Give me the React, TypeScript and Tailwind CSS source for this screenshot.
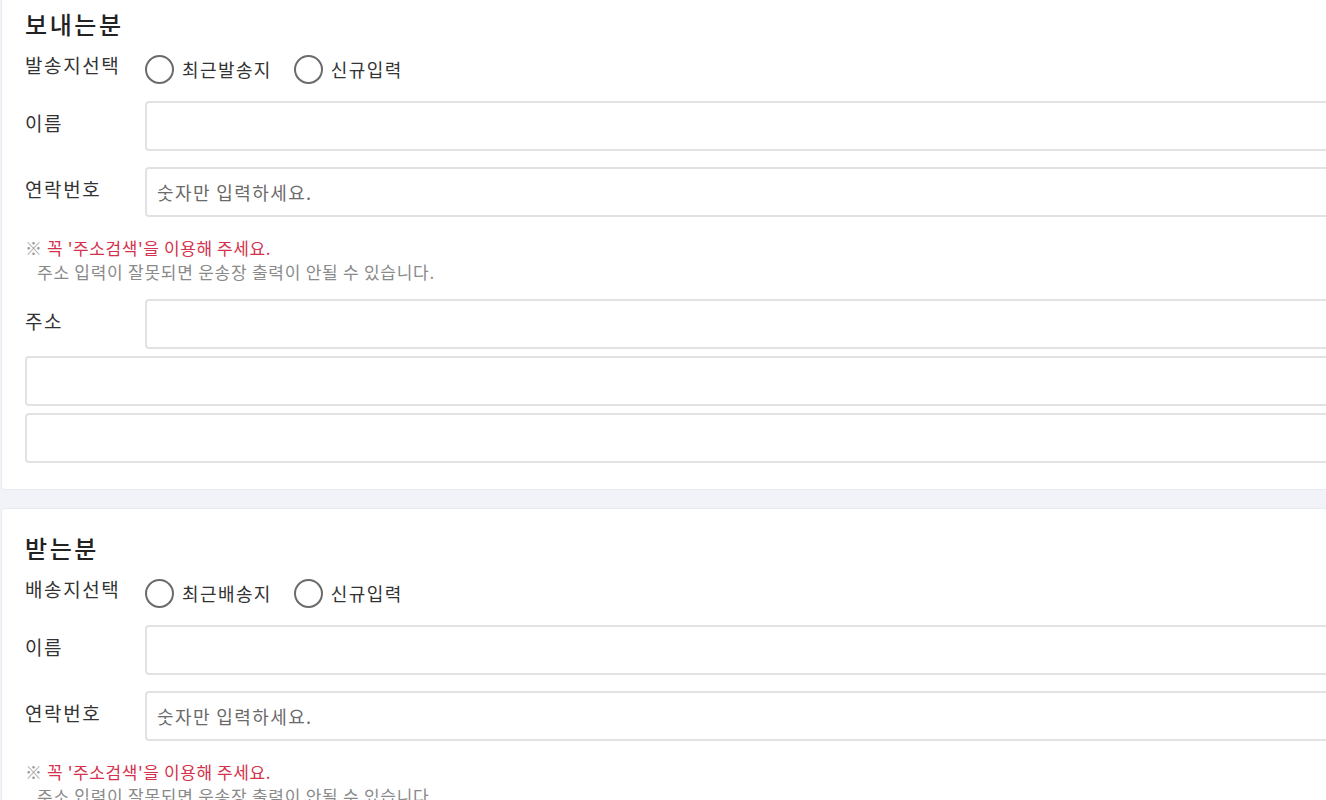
import React from "react";

const font = { fontFamily: '"Noto Sans CJK KR", "Noto Sans", sans-serif' };

const TextInput = ({ placeholder, className = "" }: { placeholder?: string; className?: string }) => (
  <input
    type="text"
    placeholder={placeholder}
    className={`block h-[50px] w-full rounded-[4px] border-2 border-[#e2e2e2] bg-white pl-[10px] text-[18px] tracking-[1.4px] text-[#333] outline-none placeholder:text-[#6a6a6a] ${className}`}
  />
);

const Radio = ({ label }: { label: string }) => (
  <label className="flex items-center gap-[8px]">
    <span className="block h-[29px] w-[29px] rounded-full border-2 border-[#6b6b6b] bg-white" />
    <span className="text-[18px] leading-[24px] tracking-[1.4px] text-[#333]">{label}</span>
  </label>
);

const FieldRow = ({ label, placeholder }: { label: string; placeholder?: string }) => (
  <div className="flex items-start">
    <div className="w-[120px] shrink-0 pt-[10px] text-[19px] leading-[24px] tracking-[1.6px] text-[#333]">{label}</div>
    <div className="flex-1">
      <TextInput placeholder={placeholder} />
    </div>
  </div>
);

const AddressCard = ({ title, pickLabel, recentLabel }: { title: string; pickLabel: string; recentLabel: string }) => (
  <section className="ml-[1px] rounded-[4px] border border-[#e9eaef] bg-white px-[23px] pt-[24px] pb-[26px]">
    <h2 className="text-[24px] font-medium leading-[30px] tracking-[2.6px] text-[#222]">{title}</h2>

    {/* 발송지 / 배송지 선택 */}
    <div className="mt-[14px] flex items-start">
      <div className="w-[120px] shrink-0 text-[19px] leading-[24px] tracking-[1.6px] text-[#333]">{pickLabel}</div>
      <div className="flex h-[32px] items-center gap-[22px]">
        <Radio label={recentLabel} />
        <Radio label="신규입력" />
      </div>
    </div>

    <div className="mt-[16px] flex flex-col gap-[16px]">
      <FieldRow label="이름" />
      <FieldRow label="연락번호" placeholder="숫자만 입력하세요." />
    </div>

    <div className="mt-[19px] text-[17px] leading-[24px]">
      <p className="tracking-[0.6px]">
        <span className="text-[#9a9a9a]">※ </span>
        <span className="text-[#d4324c]">꼭 '주소검색'을 이용해 주세요.</span>
      </p>
      <p className="pl-[12px] tracking-[0.75px] text-[#8a8a8a]">주소 입력이 잘못되면 운송장 출력이 안될 수 있습니다.</p>
    </div>

    <div className="mt-[15px] flex flex-col gap-[7px]">
      <FieldRow label="주소" />
      <TextInput />
      <TextInput />
    </div>
  </section>
);

export default function App() {
  return (
    <div className="h-[800px] w-full overflow-hidden bg-[#f2f3f8]" style={font}>
      <div className="-mt-[16px] flex w-[1500px] flex-col gap-[18px]">
        <AddressCard title="보내는분" pickLabel="발송지선택" recentLabel="최근발송지" />
        <AddressCard title="받는분" pickLabel="배송지선택" recentLabel="최근배송지" />
      </div>
    </div>
  );
}
